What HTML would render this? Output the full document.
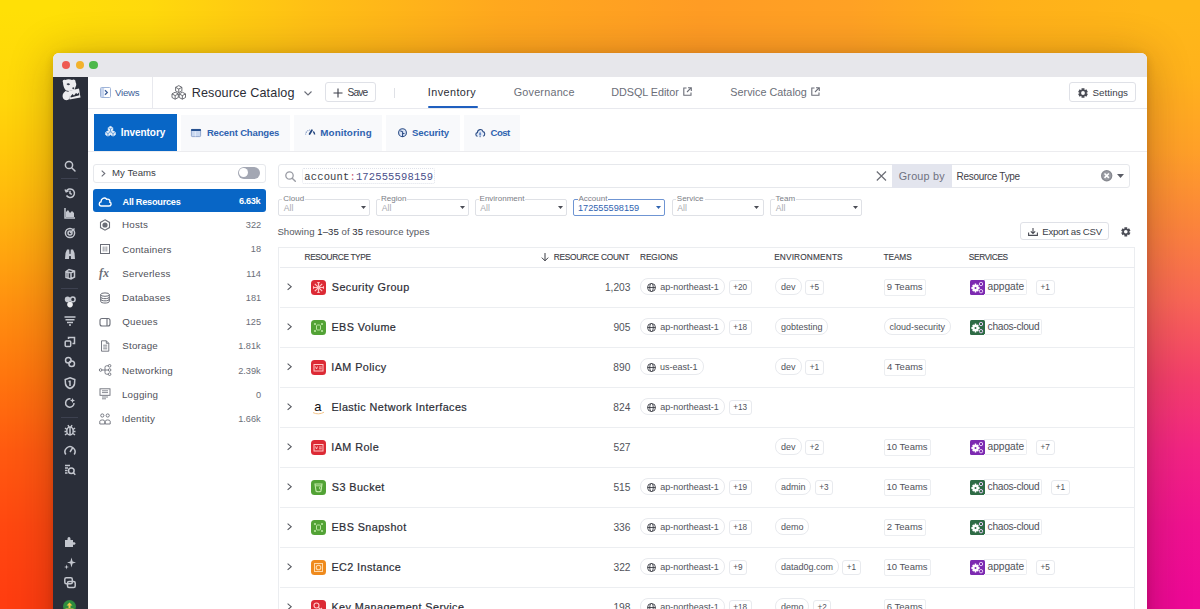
<!DOCTYPE html>
<html><head><meta charset="utf-8">
<style>
*{box-sizing:border-box;margin:0;padding:0}
html,body{width:1200px;height:609px;overflow:hidden;font-family:"Liberation Sans",sans-serif;color:#2d2f38;background:#ff9c24}
.a{position:absolute}
.t{position:absolute;white-space:nowrap}
svg.a{overflow:visible}
#bgtop{position:absolute;left:0;top:0;width:1200px;height:80px;background:linear-gradient(to right,#ffe006 0.8%,#ffd90c 12.5%,#ffc015 25.8%,#ffa81e 41.7%,#ff9c24 58.3%,#ffa124 70.8%,#ffb01a 83.3%,#ffb818 99.2%)}
#bgl{position:absolute;left:0;top:0;width:60px;height:609px;background:linear-gradient(to bottom,#ffe006 1.6%,#ffd60a 16.4%,#ffc90a 24.6%,#ffb30e 36.1%,#ff9210 49.3%,#ff760e 61.6%,#ff5a10 73.9%,#ff4810 86.2%,#ff3d10 98.5%)}
#bgr{position:absolute;left:1140px;top:0;width:60px;height:609px;background:linear-gradient(to bottom,#ffb818 1.6%,#ffb21c 12.3%,#ffa028 24.6%,#fb863a 36.1%,#f86656 49.3%,#f3406a 61.6%,#f22483 73.9%,#ef128f 86.2%,#ee0896 98.5%)}
#win{position:absolute;left:53px;top:53px;width:1094px;height:600px;background:#fff;border-radius:6px;overflow:hidden;box-shadow:0 2px 8px rgba(40,10,0,.14),0 4px 44px rgba(60,20,0,.3)}
</style></head><body>
<div id="bgtop"></div><div id="bgl"></div><div id="bgr"></div>
<div id="win"></div>
<div class="a" style="left:53px;top:53px;width:1094.00px;height:24.00px;background:#e7e7eb;border-radius:6px 6px 0 0"></div>
<div class="a" style="left:61.6px;top:60.8px;width:8.4px;height:8.4px;border-radius:50%;background:#ee5a52"></div>
<div class="a" style="left:75.5px;top:60.8px;width:8.4px;height:8.4px;border-radius:50%;background:#f2b22c"></div>
<div class="a" style="left:89.2px;top:60.8px;width:8.4px;height:8.4px;border-radius:50%;background:#4cb84a"></div>
<div class="a" style="left:53px;top:77px;width:35.00px;height:543.00px;background:#2a2e39"></div>
<svg class="a" style="left:60px;top:78px;" width="22" height="24" viewBox="0 0 22 24"><g fill="#ececef">
<path d="M3 4.5 C2 2.5 3.5 1 5.5 2 C7 1 10 1 12 2 C13.5 0.8 16 1.5 15.5 4 C16.5 5.5 16.5 7.5 15.5 9 L14.5 12 L9 13 L6 12.5 C4.5 11 3.5 8.5 3.2 6.5 Z"/>
<path d="M3.5 15 C2 17 2.3 20.5 4.5 21.8 C6.5 22.8 9 22 9.5 20 L9 14 L5.5 13 Z"/>
<path d="M8.5 13 L19 10.5 L20.5 19.5 L9.5 21.5 Z"/>
</g>
<path d="M6.5 6 C7.5 5 9.5 5.2 10 6.5 C9 7.5 7.5 7.5 6.5 6Z" fill="#3a3e4a"/>
<circle cx="13.3" cy="10.3" r="1" fill="#3a3e4a"/>
<path d="M10.5 18.5 L12.5 16 L14 17.5 L16 15 L17.5 16 L19 14.5 L19.3 17.3 L10.8 19.5Z" fill="#2a2e39"/></svg>
<div class="a" style="left:61px;top:178px;width:17.00px;height:1.00px;background:#3d4150"></div>
<div class="a" style="left:61px;top:288px;width:17.00px;height:1.00px;background:#3d4150"></div>
<div class="a" style="left:61px;top:417px;width:17.00px;height:1.00px;background:#3d4150"></div>
<svg class="a" style="left:63.8px;top:159.8px;" width="12" height="12" viewBox="0 0 12 12"><circle cx="5" cy="5" r="3.6" fill="none" stroke="#c4c7cf" stroke-width="1.5"/><path d="M7.7 7.7 L11 11" fill="none" stroke="#c4c7cf" stroke-width="1.5" stroke-linecap="round"/></svg>
<svg class="a" style="left:63.8px;top:186.8px;" width="12" height="12" viewBox="0 0 12 12"><path d="M2.2 4.5 A4.3 4.3 0 1 1 2.5 8.5" fill="none" stroke="#c4c7cf" stroke-width="1.5"/><path d="M1 2.5 L2.2 4.7 L4.5 3.8" fill="none" stroke="#c4c7cf" stroke-width="1.5"/><path d="M6 3.8 L6 6.3 L7.8 7.3" fill="none" stroke="#c4c7cf" stroke-width="1.5"/></svg>
<svg class="a" style="left:63.8px;top:207.0px;" width="12" height="12" viewBox="0 0 12 12"><path d="M1 1 L1 11 L11 11" fill="none" stroke="#c4c7cf" stroke-width="1.5"/><path fill="#c4c7cf" d="M2 10 L2 5 L4 3 L6 6 L8 4 L10 6 L10 10 Z"/></svg>
<svg class="a" style="left:63.8px;top:227.0px;" width="12" height="12" viewBox="0 0 12 12"><circle cx="6" cy="6" r="4.6" fill="none" stroke="#c4c7cf" stroke-width="1.5"/><circle cx="6" cy="6" r="2" fill="none" stroke="#c4c7cf" stroke-width="1.5"/><path d="M6 6 L10.5 1.5" fill="none" stroke="#c4c7cf" stroke-width="1.5"/></svg>
<svg class="a" style="left:63.8px;top:248.0px;" width="12" height="12" viewBox="0 0 12 12"><path fill="#c4c7cf" d="M1 11 L1.5 5 L3 1.5 L5.2 1.5 L5.5 6 L6.5 6 L6.8 1.5 L9 1.5 L10.5 5 L11 11 L7 11 L6.8 8 L5.2 8 L5 11 Z"/></svg>
<svg class="a" style="left:63.8px;top:268.0px;" width="12" height="12" viewBox="0 0 12 12"><path d="M2 3.5 L5 1.5 L10.5 3 L10.5 9 L7 11 L2 9.5 Z M2 3.5 L7 5 L10.5 3 M7 5 L7 11" fill="none" stroke="#c4c7cf" stroke-width="1.5" stroke-width="1.2"/><path d="M4 4.5 L4 10" fill="none" stroke="#c4c7cf" stroke-width="1.5" stroke-width="1"/></svg>
<svg class="a" style="left:63.8px;top:295.8px;" width="12" height="12" viewBox="0 0 12 12"><circle cx="3.6" cy="3.4" r="2.8" fill="#c4c7cf"/><circle cx="8.8" cy="3.4" r="2.3" fill="none" stroke="#c4c7cf" stroke-width="1.5" stroke-width="1.3"/><circle cx="6" cy="8.6" r="2.8" fill="#eeeef0"/></svg>
<svg class="a" style="left:63.8px;top:314.9px;" width="12" height="12" viewBox="0 0 12 12"><path d="M0.5 2 L11.5 2 M1.5 4.8 L10.5 4.8 M3 7.5 L9 7.5 M5 10 L7 10" fill="none" stroke="#c4c7cf" stroke-width="1.5" stroke-width="1.6"/></svg>
<svg class="a" style="left:63.8px;top:336.0px;" width="12" height="12" viewBox="0 0 12 12"><rect x="1.2" y="5" width="5.5" height="5.5" rx="1" fill="none" stroke="#c4c7cf" stroke-width="1.5" stroke-width="1.3"/><path d="M4.5 3 L4.5 1.5 L10.5 1.5 L10.5 7.5 L8.5 7.5" fill="none" stroke="#c4c7cf" stroke-width="1.5" stroke-width="1.3"/></svg>
<svg class="a" style="left:63.8px;top:356.3px;" width="12" height="12" viewBox="0 0 12 12"><circle cx="4.3" cy="4.3" r="2.8" fill="none" stroke="#c4c7cf" stroke-width="1.5"/><circle cx="7.7" cy="7.7" r="2.8" fill="none" stroke="#c4c7cf" stroke-width="1.5"/></svg>
<svg class="a" style="left:63.8px;top:376.6px;" width="12" height="12" viewBox="0 0 12 12"><path d="M6 0.8 L10.8 2.6 L10.5 7 C10 9.5 8 10.8 6 11.5 C4 10.8 2 9.5 1.5 7 L1.2 2.6 Z" fill="none" stroke="#c4c7cf" stroke-width="1.5" stroke-width="1.3"/><path d="M6 3.5 L6 9 M4.5 4.5 L6.5 4.5" fill="none" stroke="#c4c7cf" stroke-width="1.5" stroke-width="1.2"/></svg>
<svg class="a" style="left:63.8px;top:397.4px;" width="12" height="12" viewBox="0 0 12 12"><path d="M10 6 A4.2 4.2 0 1 1 6.5 1.9" fill="none" stroke="#c4c7cf" stroke-width="1.5"/><path fill="#c4c7cf" d="M8.5 1 L9.3 2.8 L11 3.5 L9.3 4.2 L8.5 6 L7.7 4.2 L6 3.5 L7.7 2.8Z"/></svg>
<svg class="a" style="left:63.8px;top:423.6px;" width="12" height="12" viewBox="0 0 12 12"><ellipse cx="6" cy="7" rx="3.2" ry="4" fill="none" stroke="#c4c7cf" stroke-width="1.5" stroke-width="1.3"/><path d="M6 3 L6 11 M1 4 L3 5.5 M11 4 L9 5.5 M0.5 7.5 L2.8 7.5 M11.5 7.5 L9.2 7.5 M1 11 L3 9.5 M11 11 L9 9.5 M4 1.2 L5 3 M8 1.2 L7 3" fill="none" stroke="#c4c7cf" stroke-width="1.5" stroke-width="1.1"/></svg>
<svg class="a" style="left:63.8px;top:444.4px;" width="12" height="12" viewBox="0 0 12 12"><path d="M1.8 10.5 A5 5 0 1 1 10.2 10.5" fill="none" stroke="#c4c7cf" stroke-width="1.5"/><path d="M6 8 L8.8 3.5" fill="none" stroke="#c4c7cf" stroke-width="1.5" stroke-width="1.6"/></svg>
<svg class="a" style="left:63.8px;top:464.3px;" width="12" height="12" viewBox="0 0 12 12"><path d="M1 1.5 L6 1.5 M1 4 L4 4 M1 6.5 L3.5 6.5 M1 9 L3.5 9" fill="none" stroke="#c4c7cf" stroke-width="1.5" stroke-width="1.2"/><circle cx="7.3" cy="6.8" r="2.8" fill="none" stroke="#c4c7cf" stroke-width="1.5" stroke-width="1.3"/><path d="M9.3 8.8 L11.3 10.8" fill="none" stroke="#c4c7cf" stroke-width="1.5"/></svg>
<svg class="a" style="left:63.8px;top:536.0px;" width="12" height="12" viewBox="0 0 12 12"><path fill="#c4c7cf" d="M1 11 L1 4 L3.5 4 C3.2 2 4 1 5 1 C6 1 6.8 2 6.5 4 L9 4 L9 6.3 C10.8 6 11.5 6.8 11.5 7.5 C11.5 8.2 10.8 9 9 8.7 L9 11 Z"/></svg>
<svg class="a" style="left:63.8px;top:556.8px;" width="12" height="12" viewBox="0 0 12 12"><path fill="#c4c7cf" d="M7.5 0.5 L8.6 4.4 L12 5.5 L8.6 6.6 L7.5 10.5 L6.4 6.6 L3 5.5 L6.4 4.4Z"/><path fill="#c4c7cf" d="M2.5 7.5 L3.1 9.4 L5 10 L3.1 10.6 L2.5 12.5 L1.9 10.6 L0 10 L1.9 9.4Z"/></svg>
<svg class="a" style="left:63.8px;top:576.5px;" width="12" height="12" viewBox="0 0 12 12"><rect x="0.8" y="0.8" width="7.5" height="6" rx="1.5" fill="none" stroke="#c4c7cf" stroke-width="1.5" stroke-width="1.3"/><rect x="3.5" y="4.5" width="7.7" height="6" rx="1.5" fill="none" stroke="#c4c7cf" stroke-width="1.5" stroke-width="1.3"/></svg>
<svg class="a" style="left:63.3px;top:599.5px;" width="13" height="13" viewBox="0 0 13 13"><circle cx="6.5" cy="6.5" r="6.5" fill="#2e8c3e"/><path fill="#f0c84a" d="M2.5 8.5 L10.5 8.5 L10.5 11 L2.5 11Z M6.5 2.5 L9.5 5.5 L7.5 5.5 L7.5 8 L5.5 8 L5.5 5.5 L3.5 5.5Z"/></svg>
<div class="a" style="left:88px;top:108px;width:1059.00px;height:1.00px;background:#e8e9ee"></div>
<div class="a" style="left:152px;top:77px;width:1.00px;height:31.00px;background:#e8e9ee"></div>
<svg class="a" style="left:99.8px;top:86.9px;" width="11" height="11" viewBox="0 0 11 11"><rect x="0.5" y="0.5" width="10" height="10" rx="1" fill="#fff" stroke="#9fb4d8"/><rect x="1" y="1" width="3.2" height="9" fill="#c7d5ee"/><path d="M5 3.2 L7.3 5.5 L5 7.8" fill="none" stroke="#3d5f99" stroke-width="1.3"/></svg>
<div class="t" style="left:114.95px;top:88px;font-size:9.6px;line-height:9.6px;color:#3d5f99;letter-spacing:-0.202px;">Views</div>
<svg class="a" style="left:170.5px;top:84.8px;" width="15.5" height="15" viewBox="0 0 15.5 15"><g fill="none" stroke="#55575f" stroke-width="0.85" stroke-linejoin="round"><path d="M7.75 0.6 L10.9 2.3 L10.9 5.9 L7.75 7.6 L4.6 5.9 L4.6 2.3Z M4.6 2.3 L7.75 4 L10.9 2.3 M7.75 4 L7.75 7.6"/><path d="M4.15 7.2 L7.3 8.9 L7.3 12.5 L4.15 14.2 L1 12.5 L1 8.9Z M1 8.9 L4.15 10.6 L7.3 8.9 M4.15 10.6 L4.15 14.2"/><path d="M11.35 7.2 L14.5 8.9 L14.5 12.5 L11.35 14.2 L8.2 12.5 L8.2 8.9Z M8.2 8.9 L11.35 10.6 L14.5 8.9 M11.35 10.6 L11.35 14.2"/></g></svg>
<div class="t" style="left:191.69px;top:87px;font-size:12.6px;line-height:12.6px;color:#2b2d36;letter-spacing:0.131px;">Resource Catalog</div>
<svg class="a" style="left:303.5px;top:90.5px;" width="8" height="5" viewBox="0 0 8 5"><path d="M0.5 0.5 L4 4 L7.5 0.5" fill="none" stroke="#6b6e78" stroke-width="1.1"/></svg>
<div class="a" style="left:324.6px;top:82px;width:51.00px;height:20.00px;border:1px solid #dfe1e7;border-radius:3px;background:#fff"></div>
<svg class="a" style="left:333px;top:87.5px;" width="10" height="10" viewBox="0 0 10 10"><path d="M5 0.5 L5 9.5 M0.5 5 L9.5 5" stroke="#3a3d48" stroke-width="1.1"/></svg>
<div class="t" style="left:347.54px;top:88px;font-size:10.2px;line-height:10.2px;color:#3a3d48;letter-spacing:-0.879px;">Save</div>
<div class="a" style="left:393.5px;top:88px;width:1.00px;height:10.00px;background:#dfe1e6"></div>
<div class="t" style="left:427.78px;top:87px;font-size:10.8px;line-height:10.8px;color:#2b2d36;letter-spacing:0.441px;">Inventory</div>
<div class="a" style="left:428px;top:105.5px;width:49.50px;height:2.50px;background:#1f5fbf;border-radius:1px"></div>
<div class="t" style="left:513.66px;top:87px;font-size:10.8px;line-height:10.8px;color:#6b6e78;letter-spacing:0.224px;">Governance</div>
<div class="t" style="left:611.24px;top:87px;font-size:10.8px;line-height:10.8px;color:#6b6e78;letter-spacing:-0.033px;">DDSQL Editor</div>
<svg class="a" style="left:683px;top:86.8px;" width="9" height="9" viewBox="0 0 9 9"><path d="M3.5 1 L0.8 1 L0.8 8.2 L8 8.2 L8 5.5" fill="none" stroke="#6b6e78" stroke-width="1.1"/><path d="M4 5 L8.3 0.7 M5 0.7 L8.3 0.7 L8.3 4" fill="none" stroke="#6b6e78" stroke-width="1.1"/></svg>
<div class="t" style="left:730.31px;top:87px;font-size:10.8px;line-height:10.8px;color:#6b6e78;letter-spacing:0.024px;">Service Catalog</div>
<svg class="a" style="left:810.5px;top:86.8px;" width="9" height="9" viewBox="0 0 9 9"><path d="M3.5 1 L0.8 1 L0.8 8.2 L8 8.2 L8 5.5" fill="none" stroke="#6b6e78" stroke-width="1.1"/><path d="M4 5 L8.3 0.7 M5 0.7 L8.3 0.7 L8.3 4" fill="none" stroke="#6b6e78" stroke-width="1.1"/></svg>
<div class="a" style="left:1069.3px;top:82.3px;width:66.40px;height:19.40px;border:1px solid #dfe1e7;border-radius:3px;background:#fff"></div>
<svg class="a" style="left:1077.5px;top:87.5px;" width="10" height="10" viewBox="0 0 10 10"><path fill="#4a4c55" fill-rule="evenodd" d="M3.53 1.71 L3.52 0.22 L6.48 0.22 L6.47 1.71 L7.11 2.09 L8.40 1.33 L9.88 3.89 L8.58 4.63 L8.58 5.37 L9.88 6.11 L8.40 8.67 L7.11 7.91 L6.47 8.29 L6.48 9.78 L3.52 9.78 L3.53 8.29 L2.89 7.91 L1.60 8.67 L0.12 6.11 L1.42 5.37 L1.42 4.63 L0.12 3.89 L1.60 1.33 L2.89 2.09Z M5 3.1 A1.9 1.9 0 1 0 5 6.9 A1.9 1.9 0 1 0 5 3.1Z"/></svg>
<div class="t" style="left:1092.56px;top:88px;font-size:9.8px;line-height:9.8px;color:#3a3d48;letter-spacing:0.008px;">Settings</div>
<div class="a" style="left:88px;top:151px;width:1059.00px;height:1.00px;background:#ececef"></div>
<div class="a" style="left:94.1px;top:113.9px;width:82.80px;height:36.70px;background:#0866c6"></div>
<svg class="a" style="left:104.8px;top:126.2px;" width="11" height="10.6" viewBox="0 0 15.5 15"><g fill="#e8f0fb" stroke="#fff" stroke-width="1.1" stroke-linejoin="round"><path d="M7.75 0.6 L10.9 2.3 L10.9 5.9 L7.75 7.6 L4.6 5.9 L4.6 2.3Z"/><path d="M4.15 7.2 L7.3 8.9 L7.3 12.5 L4.15 14.2 L1 12.5 L1 8.9Z"/><path d="M11.35 7.2 L14.5 8.9 L14.5 12.5 L11.35 14.2 L8.2 12.5 L8.2 8.9Z"/></g><g fill="none" stroke="#0866c6" stroke-width="0.8"><path d="M4.6 2.3 L7.75 4 L10.9 2.3 M7.75 4 L7.75 7.6 M1 8.9 L4.15 10.6 L7.3 8.9 M4.15 10.6 L4.15 14.2 M8.2 8.9 L11.35 10.6 L14.5 8.9 M11.35 10.6 L11.35 14.2"/></g></svg>
<div class="t" style="left:120.65px;top:128px;font-size:10px;line-height:10px;color:#ffffff;font-weight:700;letter-spacing:-0.038px;">Inventory</div>
<div class="a" style="left:180.5px;top:114.5px;width:109.50px;height:36.50px;background:#f8f9fb"></div>
<svg class="a" style="left:191px;top:128.5px;" width="10" height="8" viewBox="0 0 10 8"><rect x="0.4" y="0.4" width="9.2" height="7.2" rx="0.8" fill="#c9d8f0" stroke="#7f97c4" stroke-width="0.8"/><rect x="0" y="0" width="10" height="2" rx="0.8" fill="#27518f"/><path d="M4.3 2.5 L4.3 7.5" stroke="#eef3fb" stroke-width="0.8"/></svg>
<div class="t" style="left:206.88px;top:128px;font-size:9.5px;line-height:9.5px;color:#2f63b0;font-weight:700;letter-spacing:-0.149px;">Recent Changes</div>
<div class="a" style="left:294px;top:114.5px;width:88.40px;height:36.50px;background:#f8f9fb"></div>
<svg class="a" style="left:304.5px;top:125.5px;" width="10" height="10" viewBox="0 0 10 10"><path d="M0.6 8.6 A4.5 4.5 0 0 1 5.1 4.1" fill="none" stroke="#7d95c2" stroke-width="1.2" stroke-dasharray="1.1 0.9"/><path d="M8.3 5.4 A4.5 4.5 0 0 1 9.6 8.6" fill="none" stroke="#23467f" stroke-width="1.4"/><path d="M4.6 8 L6.9 4.3" stroke="#23467f" stroke-width="1.8" stroke-linecap="round"/></svg>
<div class="t" style="left:320.36px;top:128px;font-size:9.8px;line-height:9.8px;color:#2f63b0;font-weight:700;letter-spacing:0.073px;">Monitoring</div>
<div class="a" style="left:385.6px;top:114.5px;width:74.40px;height:36.50px;background:#f8f9fb"></div>
<svg class="a" style="left:397.5px;top:127.6px;" width="9" height="9.4" viewBox="0 0 9 9.4"><circle cx="4.5" cy="4.7" r="3.9" fill="#dce6f7" stroke="#2d4e86" stroke-width="1.1"/><path d="M2.2 2.8 L4.6 3.8 L4.6 8.3 M4.6 5.5 L6.5 5.5" fill="none" stroke="#2d4e86" stroke-width="1.1"/></svg>
<div class="t" style="left:412.11px;top:128px;font-size:9.6px;line-height:9.6px;color:#2f63b0;font-weight:700;letter-spacing:-0.134px;">Security</div>
<div class="a" style="left:463.6px;top:114.5px;width:56.90px;height:36.50px;background:#f8f9fb"></div>
<svg class="a" style="left:475px;top:127.8px;" width="10.2" height="9.2" viewBox="0 0 10.2 9.2"><path d="M2.6 8.2 C0.4 8.2 0.2 4.9 2.4 4.6 C2.6 1.2 7 0.4 8 3.6 C10.2 3.8 10.4 7.6 8.2 8.2" fill="#e3ebf8" stroke="#2d4e86" stroke-width="1.1"/><path d="M5.1 3.5 L6.3 6.2 L5.1 7.6 L3.9 6.2Z" fill="#5f86c8"/><path d="M5.1 7.6 L5.1 9.2" stroke="#2d4e86" stroke-width="0.9"/></svg>
<div class="t" style="left:490.62px;top:128px;font-size:9.6px;line-height:9.6px;color:#2f63b0;font-weight:700;letter-spacing:-0.611px;">Cost</div>
<div class="a" style="left:92.5px;top:163.5px;width:173.50px;height:19.00px;border:1px solid #e6e8ec;border-radius:3px"></div>
<svg class="a" style="left:100.5px;top:170px;" width="5" height="7" viewBox="0 0 5 7"><path d="M0.7 0.7 L3.8 3.5 L0.7 6.3" fill="none" stroke="#6b6e78" stroke-width="1.1"/></svg>
<div class="t" style="left:111.93px;top:168px;font-size:9.6px;line-height:9.6px;color:#3a3d45;letter-spacing:0.060px;">My Teams</div>
<div class="a" style="left:237.6px;top:166.5px;width:22.40px;height:12.50px;background:#a3a7b3;border-radius:7px"></div>
<div class="a" style="left:239.3px;top:168.2px;width:9.2px;height:9.2px;border-radius:50%;background:#fff"></div>
<div class="a" style="left:92.75px;top:188.7px;width:173.05px;height:23.80px;background:#0866c6;border-radius:3px"></div>
<svg class="a" style="left:98px;top:195.5px;" width="14" height="11" viewBox="0 0 14 11"><path d="M3.2 10 C0.8 10 0.6 6.2 3 5.8 C3 2.5 6.5 0.8 8.7 3.3 C10.8 2.6 12.5 4.3 11.8 6.2 C13.8 6.8 13.5 10 11 10 Z" fill="none" stroke="#fff" stroke-width="1.4"/></svg>
<div class="t" style="left:122.52px;top:198px;font-size:9.2px;line-height:9.2px;color:#ffffff;font-weight:700;letter-spacing:-0.247px;">All Resources</div>
<div class="t" style="left:239.08px;top:197px;font-size:9.2px;line-height:9.2px;color:#ffffff;font-weight:700;letter-spacing:-0.345px;">6.63k</div>
<svg class="a" style="left:98.7px;top:219.0px;" width="12" height="12" viewBox="0 0 12 12"><path d="M6 0.8 L10.5 3.4 L10.5 8.6 L6 11.2 L1.5 8.6 L1.5 3.4Z" fill="none" stroke="#6b6e78" stroke-width="1.1"/><circle cx="6" cy="6" r="2.6" fill="#6b6e78"/></svg>
<div class="t" style="left:121.97px;top:220px;font-size:9.8px;line-height:9.8px;color:#50525a;letter-spacing:0.200px;">Hosts</div>
<div class="t" style="left:245.84px;top:221px;font-size:9.2px;line-height:9.2px;color:#6b6e78;">322</div>
<svg class="a" style="left:98.7px;top:243.2px;" width="12" height="12" viewBox="0 0 12 12"><rect x="1.5" y="1.5" width="9" height="9" fill="none" stroke="#6b6e78" stroke-width="1"/><path d="M4.2 3.5 L4.2 8.5 M6 3.5 L6 8.5 M7.8 3.5 L7.8 8.5" stroke="#6b6e78" stroke-width="0.7"/></svg>
<div class="t" style="left:122.26px;top:245px;font-size:9.8px;line-height:9.8px;color:#50525a;letter-spacing:0.200px;">Containers</div>
<div class="t" style="left:250.86px;top:245px;font-size:9.2px;line-height:9.2px;color:#6b6e78;">18</div>
<svg class="a" style="left:98.7px;top:267.4px;" width="12" height="12" viewBox="0 0 12 12"><text x="0" y="9.8" font-family="Liberation Serif" font-style="italic" font-weight="bold" font-size="12" fill="#6b6e78">fx</text></svg>
<div class="t" style="left:122.31px;top:269px;font-size:9.8px;line-height:9.8px;color:#50525a;letter-spacing:0.200px;">Serverless</div>
<div class="t" style="left:246.30px;top:270px;font-size:9.2px;line-height:9.2px;color:#6b6e78;">114</div>
<svg class="a" style="left:98.7px;top:291.6px;" width="12" height="12" viewBox="0 0 12 12"><g fill="none" stroke="#6b6e78" stroke-width="1"><ellipse cx="6" cy="2.6" rx="4.3" ry="1.7"/><path d="M1.7 2.6 L1.7 9.4 C1.7 11.6 10.3 11.6 10.3 9.4 L10.3 2.6 M1.7 5 C1.7 7.2 10.3 7.2 10.3 5 M1.7 7.2 C1.7 9.4 10.3 9.4 10.3 7.2"/></g></svg>
<div class="t" style="left:121.97px;top:293px;font-size:9.8px;line-height:9.8px;color:#50525a;letter-spacing:0.200px;">Databases</div>
<div class="t" style="left:245.80px;top:294px;font-size:9.2px;line-height:9.2px;color:#6b6e78;">181</div>
<svg class="a" style="left:98.7px;top:315.8px;" width="12" height="12" viewBox="0 0 12 12"><g fill="none" stroke="#6b6e78" stroke-width="1.1"><rect x="1" y="2.5" width="10" height="7.5" rx="2"/><path d="M8 2.5 L8 10"/></g></svg>
<div class="t" style="left:122.31px;top:317px;font-size:9.8px;line-height:9.8px;color:#50525a;letter-spacing:0.200px;">Queues</div>
<div class="t" style="left:245.75px;top:318px;font-size:9.2px;line-height:9.2px;color:#6b6e78;">125</div>
<svg class="a" style="left:98.7px;top:340.0px;" width="12" height="12" viewBox="0 0 12 12"><g fill="none" stroke="#6b6e78" stroke-width="0.9"><path d="M2.5 0.8 L7.3 0.8 L9.8 3.3 L9.8 11.2 L2.5 11.2Z M7.3 0.8 L7.3 3.3 L9.8 3.3"/><path d="M4.2 5.2 L8.2 5.2 M4.2 7 L8.2 7 M4.2 8.8 L8.2 8.8" stroke-width="0.8"/></g></svg>
<div class="t" style="left:122.31px;top:341px;font-size:9.8px;line-height:9.8px;color:#50525a;letter-spacing:0.200px;">Storage</div>
<div class="t" style="left:238.21px;top:342px;font-size:9.2px;line-height:9.2px;color:#6b6e78;">1.81k</div>
<svg class="a" style="left:98.7px;top:364.2px;" width="12" height="12" viewBox="0 0 12 12"><g fill="none" stroke="#6b6e78" stroke-width="0.9"><circle cx="1.6" cy="6" r="1.3"/><circle cx="10.6" cy="1.8" r="1.3"/><circle cx="10.6" cy="6" r="1.3"/><circle cx="10.6" cy="10.2" r="1.3"/><path d="M2.9 6 L9.3 6 M6 6 L6 3.3 Q6 1.8 7.5 1.8 L9.3 1.8 M6 6 L6 8.7 Q6 10.2 7.5 10.2 L9.3 10.2"/></g></svg>
<div class="t" style="left:121.97px;top:366px;font-size:9.8px;line-height:9.8px;color:#50525a;letter-spacing:0.200px;">Networking</div>
<div class="t" style="left:238.21px;top:367px;font-size:9.2px;line-height:9.2px;color:#6b6e78;">2.39k</div>
<svg class="a" style="left:98.7px;top:388.4px;" width="12" height="12" viewBox="0 0 12 12"><g fill="none" stroke="#6b6e78" stroke-width="0.9"><rect x="1" y="0.8" width="10" height="6.5"/><path d="M3 2.8 L9 2.8 M3 4.6 L9 4.6 M3 9 L9 9 M3 10.8 L7 10.8" stroke-width="0.8"/></g></svg>
<div class="t" style="left:121.97px;top:390px;font-size:9.8px;line-height:9.8px;color:#50525a;letter-spacing:0.200px;">Logging</div>
<div class="t" style="left:255.92px;top:391px;font-size:9.2px;line-height:9.2px;color:#6b6e78;">0</div>
<svg class="a" style="left:98.7px;top:412.6px;" width="12" height="12" viewBox="0 0 12 12"><g fill="none" stroke="#6b6e78" stroke-width="0.9"><circle cx="3.3" cy="2.5" r="1.6"/><circle cx="8.7" cy="2.5" r="1.6"/><path d="M0.8 11 L0.8 8.2 C0.8 6.5 5.8 6.5 5.8 8.2 L5.8 11Z M6.2 11 L6.2 8.2 C6.2 6.5 11.2 6.5 11.2 8.2 L11.2 11Z"/></g></svg>
<div class="t" style="left:121.87px;top:414px;font-size:9.8px;line-height:9.8px;color:#50525a;letter-spacing:0.200px;">Identity</div>
<div class="t" style="left:238.21px;top:415px;font-size:9.2px;line-height:9.2px;color:#6b6e78;">1.66k</div>
<div class="a" style="left:278px;top:163.5px;width:851.50px;height:24.50px;border:1px solid #e6e8ec;border-radius:3px;background:#fff"></div>
<svg class="a" style="left:284.5px;top:171.3px;" width="11" height="11" viewBox="0 0 11 11"><circle cx="4.5" cy="4.5" r="3.7" fill="none" stroke="#9a9ca4" stroke-width="1.3"/><path d="M7.2 7.2 L10.3 10.3" stroke="#9a9ca4" stroke-width="1.4" stroke-linecap="round"/></svg>
<div class="a" style="left:301.5px;top:167.8px;width:133.80px;height:16.20px;border:1px dotted #dfe2ea;border-radius:2px"></div>
<div class="t" style="left:304.37px;top:172px;font-size:10.5px;line-height:10.5px;font-family:'Liberation Mono',monospace;color:#3a3c44;letter-spacing:0.14px">account<span style="color:#d0607a">:</span><span style="color:#4a4f8a">172555598159</span></div>
<svg class="a" style="left:876px;top:170.6px;" width="11" height="10" viewBox="0 0 11 10"><path d="M0.8 0.5 L10 9.5 M10 0.5 L0.8 9.5" stroke="#6b6d75" stroke-width="1.2"/></svg>
<div class="a" style="left:892.2px;top:163.5px;width:59.50px;height:24.50px;background:#e3e5ee"></div>
<div class="t" style="left:898.76px;top:171px;font-size:10.8px;line-height:10.8px;color:#6e7180;letter-spacing:0.200px;">Group by</div>
<div class="t" style="left:956.60px;top:172px;font-size:10px;line-height:10px;color:#3f4149;letter-spacing:-0.292px;">Resource Type</div>
<svg class="a" style="left:1100.9px;top:169.6px;" width="11.4" height="11.4" viewBox="0 0 11.4 11.4"><circle cx="5.7" cy="5.7" r="5.7" fill="#86888f"/><circle cx="5.7" cy="5.7" r="4.5" fill="#9a9ca3"/><path d="M3.5 3.5 L7.9 7.9 M7.9 3.5 L3.5 7.9" stroke="#fff" stroke-width="1.6"/></svg>
<svg class="a" style="left:1116.7px;top:173.8px;" width="7" height="4" viewBox="0 0 7 4"><path d="M0 0 L7 0 L3.5 4Z" fill="#5a5c65"/></svg>
<div class="a" style="left:278px;top:199.2px;width:92.00px;height:16.40px;border:1px solid #dfe1e6;border-radius:2px;background:#fff"></div>
<div class="t" style="left:282.30px;top:195px;font-size:8px;line-height:8px;color:#7b7e86;background:#fff;padding:0 1px;">Cloud</div>
<div class="t" style="left:283.80px;top:204px;font-size:8.6px;line-height:8.6px;color:#a8aab0;">All</div>
<svg class="a" style="left:360.8px;top:206.2px;" width="5" height="3" viewBox="0 0 5 3"><path d="M0 0 L5 0 L2.5 3Z" fill="#4a4c55"/></svg>
<div class="a" style="left:376px;top:199.2px;width:93.00px;height:16.40px;border:1px solid #dfe1e6;border-radius:2px;background:#fff"></div>
<div class="t" style="left:380.06px;top:195px;font-size:8px;line-height:8px;color:#7b7e86;background:#fff;padding:0 1px;">Region</div>
<div class="t" style="left:381.80px;top:204px;font-size:8.6px;line-height:8.6px;color:#a8aab0;">All</div>
<svg class="a" style="left:459.8px;top:206.2px;" width="5" height="3" viewBox="0 0 5 3"><path d="M0 0 L5 0 L2.5 3Z" fill="#4a4c55"/></svg>
<div class="a" style="left:474.5px;top:199.2px;width:92.50px;height:16.40px;border:1px solid #dfe1e6;border-radius:2px;background:#fff"></div>
<div class="t" style="left:478.56px;top:195px;font-size:8px;line-height:8px;color:#7b7e86;background:#fff;padding:0 1px;">Environment</div>
<div class="t" style="left:480.30px;top:204px;font-size:8.6px;line-height:8.6px;color:#a8aab0;">All</div>
<svg class="a" style="left:557.8px;top:206.2px;" width="5" height="3" viewBox="0 0 5 3"><path d="M0 0 L5 0 L2.5 3Z" fill="#4a4c55"/></svg>
<div class="a" style="left:572.8px;top:199.2px;width:92.50px;height:16.40px;border:1px solid #6f95d3;border-radius:2px;background:#fff"></div>
<div class="t" style="left:577.50px;top:195px;font-size:8px;line-height:8px;color:#7b7e86;background:#fff;padding:0 1px;">Account</div>
<div class="t" style="left:577.91px;top:204px;font-size:9.2px;line-height:9.2px;color:#2f63b0;">172555598159</div>
<svg class="a" style="left:656.1px;top:206.2px;" width="5" height="3" viewBox="0 0 5 3"><path d="M0 0 L5 0 L2.5 3Z" fill="#2f63b0"/></svg>
<div class="a" style="left:671.5px;top:199.2px;width:92.00px;height:16.40px;border:1px solid #dfe1e6;border-radius:2px;background:#fff"></div>
<div class="t" style="left:675.84px;top:195px;font-size:8px;line-height:8px;color:#7b7e86;background:#fff;padding:0 1px;">Service</div>
<div class="t" style="left:677.30px;top:204px;font-size:8.6px;line-height:8.6px;color:#a8aab0;">All</div>
<svg class="a" style="left:754.3px;top:206.2px;" width="5" height="3" viewBox="0 0 5 3"><path d="M0 0 L5 0 L2.5 3Z" fill="#4a4c55"/></svg>
<div class="a" style="left:770px;top:199.2px;width:92.00px;height:16.40px;border:1px solid #dfe1e6;border-radius:2px;background:#fff"></div>
<div class="t" style="left:774.54px;top:195px;font-size:8px;line-height:8px;color:#7b7e86;background:#fff;padding:0 1px;">Team</div>
<div class="t" style="left:775.80px;top:204px;font-size:8.6px;line-height:8.6px;color:#a8aab0;">All</div>
<svg class="a" style="left:852.8px;top:206.2px;" width="5" height="3" viewBox="0 0 5 3"><path d="M0 0 L5 0 L2.5 3Z" fill="#4a4c55"/></svg>
<div class="t" style="left:277.4px;top:227px;font-size:9.6px;line-height:9.6px;color:#55575f;letter-spacing:0.05px">Showing <span style="color:#2b2d36">1–35</span> of <span style="color:#2b2d36">35</span> resource types</div>
<div class="a" style="left:1019.7px;top:221.6px;width:89.60px;height:18.80px;border:1px solid #dfe1e7;border-radius:3px;background:#fff"></div>
<svg class="a" style="left:1027.5px;top:228px;" width="10" height="8" viewBox="0 0 10 8"><path d="M0.6 4.5 L0.6 7.4 L9.4 7.4 L9.4 4.5" fill="none" stroke="#4a4c55" stroke-width="1.1"/><path d="M5 0 L5 5.5 M2.8 3.3 L5 5.5 L7.2 3.3" fill="none" stroke="#4a4c55" stroke-width="1.1"/></svg>
<div class="t" style="left:1042.33px;top:227px;font-size:9.6px;line-height:9.6px;color:#3a3d48;letter-spacing:-0.268px;">Export as CSV</div>
<svg class="a" style="left:1120.7px;top:226.5px;" width="9.6" height="9.6" viewBox="0 0 10 10"><path fill="#4a4c55" fill-rule="evenodd" d="M3.53 1.71 L3.52 0.22 L6.48 0.22 L6.47 1.71 L7.11 2.09 L8.40 1.33 L9.88 3.89 L8.58 4.63 L8.58 5.37 L9.88 6.11 L8.40 8.67 L7.11 7.91 L6.47 8.29 L6.48 9.78 L3.52 9.78 L3.53 8.29 L2.89 7.91 L1.60 8.67 L0.12 6.11 L1.42 5.37 L1.42 4.63 L0.12 3.89 L1.60 1.33 L2.89 2.09Z M5 3.1 A1.9 1.9 0 1 0 5 6.9 A1.9 1.9 0 1 0 5 3.1Z"/></svg>
<div class="a" style="left:277.6px;top:246.8px;width:857.70px;height:393.20px;border:1px solid #ebedf0"></div>
<div class="a" style="left:279.5px;top:267px;width:855.00px;height:1.00px;background:#e9ebef"></div>
<div class="t" style="left:304.54px;top:253px;font-size:8.3px;line-height:8.3px;color:#3a3c44;letter-spacing:-0.370px;-webkit-text-stroke:0.12px #3a3c44;">RESOURCE TYPE</div>
<svg class="a" style="left:541px;top:253px;" width="8" height="8.5" viewBox="0 0 8 8.5"><path d="M4 0 L4 7.8 M0.8 4.6 L4 7.8 L7.2 4.6" fill="none" stroke="#3a3c44" stroke-width="1"/></svg>
<div class="t" style="left:553.74px;top:253px;font-size:8.3px;line-height:8.3px;color:#3a3c44;letter-spacing:-0.232px;-webkit-text-stroke:0.12px #3a3c44;">RESOURCE COUNT</div>
<div class="t" style="left:639.94px;top:253px;font-size:8.3px;line-height:8.3px;color:#3a3c44;letter-spacing:-0.054px;-webkit-text-stroke:0.12px #3a3c44;">REGIONS</div>
<div class="t" style="left:774.14px;top:253px;font-size:8.3px;line-height:8.3px;color:#3a3c44;letter-spacing:0.153px;-webkit-text-stroke:0.12px #3a3c44;">ENVIRONMENTS</div>
<div class="t" style="left:883.43px;top:253px;font-size:8.3px;line-height:8.3px;color:#3a3c44;letter-spacing:-0.064px;-webkit-text-stroke:0.12px #3a3c44;">TEAMS</div>
<div class="t" style="left:968.83px;top:253px;font-size:8.3px;line-height:8.3px;color:#3a3c44;letter-spacing:-0.363px;-webkit-text-stroke:0.12px #3a3c44;">SERVICES</div>
<div class="a" style="left:279.5px;top:307px;width:855.00px;height:1.00px;background:#eceef1"></div>
<svg class="a" style="left:287px;top:282.8px;" width="5" height="7.5" viewBox="0 0 5 7.5"><path d="M0.6 0.6 L4.2 3.7 L0.6 6.8" fill="none" stroke="#55575f" stroke-width="1.1"/></svg>
<svg class="a" style="left:310.9px;top:280px;" width="15" height="15" viewBox="0 0 15 15"><rect x="0" y="0" width="15" height="15" rx="3.5" fill="#dc2a35"/><g stroke="#ffc4c4" stroke-width="1.2" fill="none"><path d="M7.5 2.3 L7.5 12.7 M2.3 7.5 L12.7 7.5 M3.8 3.8 L11.2 11.2 M11.2 3.8 L3.8 11.2"/></g><g fill="#ffc4c4"><path d="M5.8 2 L9.2 2 L7.5 4Z M5.8 13 L9.2 13 L7.5 11Z M2 5.8 L2 9.2 L4 7.5Z M13 5.8 L13 9.2 L11 7.5Z"/><circle cx="7.5" cy="7.5" r="1.6"/></g></svg>
<div class="t" style="left:331.81px;top:282px;font-size:10.8px;line-height:10.8px;color:#2b2d36;letter-spacing:0.420px;-webkit-text-stroke:0.2px #2b2d36;">Security Group</div>
<div class="t" style="left:604.91px;top:283px;font-size:10.2px;line-height:10.2px;color:#50525a;">1,203</div>
<div class="a" style="left:640px;top:278.4px;width:84.88px;height:16.80px;border:1px solid #e8eaee;border-radius:8px"></div>
<svg class="a" style="left:646.7px;top:283px;" width="9" height="9" viewBox="0 0 9 9"><g fill="none" stroke="#3a3c44" stroke-width="0.9"><circle cx="4.5" cy="4.5" r="4"/><ellipse cx="4.5" cy="4.5" rx="1.8" ry="4"/><path d="M0.5 4.5 L8.5 4.5"/></g></svg>
<div class="t" style="left:660.34px;top:283px;font-size:9.0px;line-height:9.0px;color:#50525a;">ap-northeast-1</div>
<div class="a" style="left:728.68px;top:280px;width:23.20px;height:14.50px;border:1px solid #e8eaee;border-radius:3px"></div>
<div class="t" style="left:733.27px;top:284px;font-size:8.2px;line-height:8.2px;color:#50525a;">+20</div>
<div class="a" style="left:775.3px;top:278.4px;width:26.48px;height:16.80px;border:1px solid #e8eaee;border-radius:8px"></div>
<div class="t" style="left:780.94px;top:283px;font-size:9.0px;line-height:9.0px;color:#50525a;">dev</div>
<div class="a" style="left:805.18px;top:280px;width:18.62px;height:14.50px;border:1px solid #e8eaee;border-radius:3px"></div>
<div class="t" style="left:809.77px;top:284px;font-size:8.2px;line-height:8.2px;color:#50525a;">+5</div>
<div class="a" style="left:884px;top:279px;width:41.76px;height:16.50px;border:1px solid #eceef1;border-radius:2px"></div>
<div class="t" style="left:886.87px;top:282px;font-size:9.5px;line-height:9.5px;color:#50525a;">9 Teams</div>
<svg class="a" style="left:969.9px;top:279.8px;" width="15" height="15" viewBox="0 0 15 15"><rect x="0" y="0" width="15" height="15" rx="1.5" fill="#7d2ab1"/><g fill="#fff"><circle cx="5.5" cy="8" r="2.6"/><path d="M4.8 3.6 L6.2 3.6 L6.5 5 L7.8 4.4 L8.8 5.4 L8.2 6.7 L9.6 7 L9.6 8.9 L8.2 9.2 L8.8 10.5 L7.8 11.5 L6.5 10.9 L6.2 12.4 L4.8 12.4 L4.5 10.9 L3.2 11.5 L2.2 10.5 L2.8 9.2 L1.4 8.9 L1.4 7 L2.8 6.7 L2.2 5.4 L3.2 4.4 L4.5 5Z"/></g><circle cx="5.5" cy="8" r="1" fill="#7d2ab1"/><g fill="none" stroke="#e6c8f5" stroke-width="1"><circle cx="11" cy="4" r="1.7"/><circle cx="11" cy="11.2" r="1.7"/></g></svg>
<div class="a" style="left:984px;top:279.3px;width:43.00px;height:15.70px;border:1px solid #eceef1;border-left:none;border-radius:0 2px 2px 0"></div>
<div class="t" style="left:987.59px;top:282px;font-size:10.2px;line-height:10.2px;color:#50525a;letter-spacing:-0.034px;">appgate</div>
<div class="a" style="left:1036.0px;top:280px;width:18.57px;height:14.50px;border:1px solid #e8eaee;border-radius:3px"></div>
<div class="t" style="left:1040.59px;top:284px;font-size:8.2px;line-height:8.2px;color:#50525a;">+1</div>
<div class="a" style="left:279.5px;top:347px;width:855.00px;height:1.00px;background:#eceef1"></div>
<svg class="a" style="left:287px;top:322.8px;" width="5" height="7.5" viewBox="0 0 5 7.5"><path d="M0.6 0.6 L4.2 3.7 L0.6 6.8" fill="none" stroke="#55575f" stroke-width="1.1"/></svg>
<svg class="a" style="left:310.9px;top:320px;" width="15" height="15" viewBox="0 0 15 15"><rect x="0" y="0" width="15" height="15" rx="3.5" fill="#52a235"/><g fill="#b8e6a0"><circle cx="4" cy="4" r="1.1"/><circle cx="11" cy="4" r="1.1"/><circle cx="4" cy="11" r="1.1"/><circle cx="11" cy="11" r="1.1"/></g><rect x="5.5" y="5" width="4" height="5" rx="1" fill="none" stroke="#b8e6a0" stroke-width="1"/></svg>
<div class="t" style="left:331.44px;top:322px;font-size:10.8px;line-height:10.8px;color:#2b2d36;letter-spacing:0.420px;-webkit-text-stroke:0.2px #2b2d36;">EBS Volume</div>
<div class="t" style="left:613.43px;top:323px;font-size:10.2px;line-height:10.2px;color:#50525a;">905</div>
<div class="a" style="left:640px;top:318.4px;width:84.88px;height:16.80px;border:1px solid #e8eaee;border-radius:8px"></div>
<svg class="a" style="left:646.7px;top:323px;" width="9" height="9" viewBox="0 0 9 9"><g fill="none" stroke="#3a3c44" stroke-width="0.9"><circle cx="4.5" cy="4.5" r="4"/><ellipse cx="4.5" cy="4.5" rx="1.8" ry="4"/><path d="M0.5 4.5 L8.5 4.5"/></g></svg>
<div class="t" style="left:660.34px;top:323px;font-size:9.0px;line-height:9.0px;color:#50525a;">ap-northeast-1</div>
<div class="a" style="left:728.68px;top:320px;width:23.16px;height:14.50px;border:1px solid #e8eaee;border-radius:3px"></div>
<div class="t" style="left:733.27px;top:324px;font-size:8.2px;line-height:8.2px;color:#50525a;">+18</div>
<div class="a" style="left:775.3px;top:318.4px;width:52.99px;height:16.80px;border:1px solid #e8eaee;border-radius:8px"></div>
<div class="t" style="left:780.94px;top:323px;font-size:9.0px;line-height:9.0px;color:#50525a;">gobtesting</div>
<div class="a" style="left:883.8px;top:318.4px;width:67.57px;height:16.80px;border:1px solid #e8eaee;border-radius:8px"></div>
<div class="t" style="left:889.44px;top:323px;font-size:9.0px;line-height:9.0px;color:#50525a;">cloud-security</div>
<svg class="a" style="left:969.9px;top:319.8px;" width="15" height="15" viewBox="0 0 15 15"><rect x="0" y="0" width="15" height="15" rx="1.5" fill="#2e6b45"/><g fill="#fff"><circle cx="5.5" cy="8" r="2.6"/><path d="M4.8 3.6 L6.2 3.6 L6.5 5 L7.8 4.4 L8.8 5.4 L8.2 6.7 L9.6 7 L9.6 8.9 L8.2 9.2 L8.8 10.5 L7.8 11.5 L6.5 10.9 L6.2 12.4 L4.8 12.4 L4.5 10.9 L3.2 11.5 L2.2 10.5 L2.8 9.2 L1.4 8.9 L1.4 7 L2.8 6.7 L2.2 5.4 L3.2 4.4 L4.5 5Z"/></g><circle cx="5.5" cy="8" r="1" fill="#2e6b45"/><g fill="none" stroke="#e6c8f5" stroke-width="1"><circle cx="11" cy="4" r="1.7"/><circle cx="11" cy="11.2" r="1.7"/></g></svg>
<div class="a" style="left:984px;top:319.3px;width:58.20px;height:15.70px;border:1px solid #eceef1;border-left:none;border-radius:0 2px 2px 0"></div>
<div class="t" style="left:987.59px;top:322px;font-size:10.2px;line-height:10.2px;color:#50525a;letter-spacing:-0.291px;">chaos-cloud</div>
<div class="a" style="left:279.5px;top:387px;width:855.00px;height:1.00px;background:#eceef1"></div>
<svg class="a" style="left:287px;top:362.8px;" width="5" height="7.5" viewBox="0 0 5 7.5"><path d="M0.6 0.6 L4.2 3.7 L0.6 6.8" fill="none" stroke="#55575f" stroke-width="1.1"/></svg>
<svg class="a" style="left:310.9px;top:360px;" width="15" height="15" viewBox="0 0 15 15"><rect x="0" y="0" width="15" height="15" rx="3.5" fill="#dc2a35"/><rect x="3" y="4.5" width="9" height="6.5" fill="none" stroke="#ffc8c8" stroke-width="1"/><path d="M4.5 6.5 L5.5 9 L6.5 6.5 M8 7 L10.8 7 M8 8.8 L10.8 8.8" stroke="#ffc8c8" stroke-width="0.9" fill="none"/></svg>
<div class="t" style="left:331.33px;top:362px;font-size:10.8px;line-height:10.8px;color:#2b2d36;letter-spacing:0.420px;-webkit-text-stroke:0.2px #2b2d36;">IAM Policy</div>
<div class="t" style="left:613.37px;top:363px;font-size:10.2px;line-height:10.2px;color:#50525a;">890</div>
<div class="a" style="left:640px;top:358.4px;width:63.60px;height:16.80px;border:1px solid #e8eaee;border-radius:8px"></div>
<svg class="a" style="left:646.7px;top:363px;" width="9" height="9" viewBox="0 0 9 9"><g fill="none" stroke="#3a3c44" stroke-width="0.9"><circle cx="4.5" cy="4.5" r="4"/><ellipse cx="4.5" cy="4.5" rx="1.8" ry="4"/><path d="M0.5 4.5 L8.5 4.5"/></g></svg>
<div class="t" style="left:660.12px;top:363px;font-size:9.0px;line-height:9.0px;color:#50525a;">us-east-1</div>
<div class="a" style="left:775.3px;top:358.4px;width:26.48px;height:16.80px;border:1px solid #e8eaee;border-radius:8px"></div>
<div class="t" style="left:780.94px;top:363px;font-size:9.0px;line-height:9.0px;color:#50525a;">dev</div>
<div class="a" style="left:805.18px;top:360px;width:18.57px;height:14.50px;border:1px solid #e8eaee;border-radius:3px"></div>
<div class="t" style="left:809.77px;top:364px;font-size:8.2px;line-height:8.2px;color:#50525a;">+1</div>
<div class="a" style="left:884px;top:359px;width:42.00px;height:16.50px;border:1px solid #eceef1;border-radius:2px"></div>
<div class="t" style="left:887.11px;top:362px;font-size:9.5px;line-height:9.5px;color:#50525a;">4 Teams</div>
<div class="a" style="left:279.5px;top:427px;width:855.00px;height:1.00px;background:#eceef1"></div>
<svg class="a" style="left:287px;top:402.8px;" width="5" height="7.5" viewBox="0 0 5 7.5"><path d="M0.6 0.6 L4.2 3.7 L0.6 6.8" fill="none" stroke="#55575f" stroke-width="1.1"/></svg>
<svg class="a" style="left:310.9px;top:400px;" width="15" height="15" viewBox="0 0 15 15"><text x="3.2" y="10.8" font-family="Liberation Sans" font-size="13" fill="#111">a</text><path d="M2 12.6 C5.5 14.3 9.5 14.3 13 12.2" fill="none" stroke="#f5c58a" stroke-width="1"/></svg>
<div class="t" style="left:331.44px;top:402px;font-size:10.8px;line-height:10.8px;color:#2b2d36;letter-spacing:0.420px;-webkit-text-stroke:0.2px #2b2d36;">Elastic Network Interfaces</div>
<div class="t" style="left:613.32px;top:403px;font-size:10.2px;line-height:10.2px;color:#50525a;">824</div>
<div class="a" style="left:640px;top:398.4px;width:84.88px;height:16.80px;border:1px solid #e8eaee;border-radius:8px"></div>
<svg class="a" style="left:646.7px;top:403px;" width="9" height="9" viewBox="0 0 9 9"><g fill="none" stroke="#3a3c44" stroke-width="0.9"><circle cx="4.5" cy="4.5" r="4"/><ellipse cx="4.5" cy="4.5" rx="1.8" ry="4"/><path d="M0.5 4.5 L8.5 4.5"/></g></svg>
<div class="t" style="left:660.34px;top:403px;font-size:9.0px;line-height:9.0px;color:#50525a;">ap-northeast-1</div>
<div class="a" style="left:728.68px;top:400px;width:23.16px;height:14.50px;border:1px solid #e8eaee;border-radius:3px"></div>
<div class="t" style="left:733.27px;top:404px;font-size:8.2px;line-height:8.2px;color:#50525a;">+13</div>
<div class="a" style="left:279.5px;top:467px;width:855.00px;height:1.00px;background:#eceef1"></div>
<svg class="a" style="left:287px;top:442.8px;" width="5" height="7.5" viewBox="0 0 5 7.5"><path d="M0.6 0.6 L4.2 3.7 L0.6 6.8" fill="none" stroke="#55575f" stroke-width="1.1"/></svg>
<svg class="a" style="left:310.9px;top:440px;" width="15" height="15" viewBox="0 0 15 15"><rect x="0" y="0" width="15" height="15" rx="3.5" fill="#dc2a35"/><rect x="3" y="4.5" width="9" height="6.5" fill="none" stroke="#ffc8c8" stroke-width="1"/><path d="M4.5 6.5 L5.5 9 L6.5 6.5 M8 7 L10.8 7 M8 8.8 L10.8 8.8" stroke="#ffc8c8" stroke-width="0.9" fill="none"/></svg>
<div class="t" style="left:331.33px;top:442px;font-size:10.8px;line-height:10.8px;color:#2b2d36;letter-spacing:0.420px;-webkit-text-stroke:0.2px #2b2d36;">IAM Role</div>
<div class="t" style="left:613.53px;top:443px;font-size:10.2px;line-height:10.2px;color:#50525a;">527</div>
<div class="a" style="left:775.3px;top:438.4px;width:26.48px;height:16.80px;border:1px solid #e8eaee;border-radius:8px"></div>
<div class="t" style="left:780.94px;top:443px;font-size:9.0px;line-height:9.0px;color:#50525a;">dev</div>
<div class="a" style="left:805.18px;top:440px;width:18.53px;height:14.50px;border:1px solid #e8eaee;border-radius:3px"></div>
<div class="t" style="left:809.77px;top:444px;font-size:8.2px;line-height:8.2px;color:#50525a;">+2</div>
<div class="a" style="left:884px;top:439px;width:46.79px;height:16.50px;border:1px solid #eceef1;border-radius:2px"></div>
<div class="t" style="left:886.59px;top:442px;font-size:9.5px;line-height:9.5px;color:#50525a;">10 Teams</div>
<svg class="a" style="left:969.9px;top:439.8px;" width="15" height="15" viewBox="0 0 15 15"><rect x="0" y="0" width="15" height="15" rx="1.5" fill="#7d2ab1"/><g fill="#fff"><circle cx="5.5" cy="8" r="2.6"/><path d="M4.8 3.6 L6.2 3.6 L6.5 5 L7.8 4.4 L8.8 5.4 L8.2 6.7 L9.6 7 L9.6 8.9 L8.2 9.2 L8.8 10.5 L7.8 11.5 L6.5 10.9 L6.2 12.4 L4.8 12.4 L4.5 10.9 L3.2 11.5 L2.2 10.5 L2.8 9.2 L1.4 8.9 L1.4 7 L2.8 6.7 L2.2 5.4 L3.2 4.4 L4.5 5Z"/></g><circle cx="5.5" cy="8" r="1" fill="#7d2ab1"/><g fill="none" stroke="#e6c8f5" stroke-width="1"><circle cx="11" cy="4" r="1.7"/><circle cx="11" cy="11.2" r="1.7"/></g></svg>
<div class="a" style="left:984px;top:439.3px;width:43.00px;height:15.70px;border:1px solid #eceef1;border-left:none;border-radius:0 2px 2px 0"></div>
<div class="t" style="left:987.59px;top:442px;font-size:10.2px;line-height:10.2px;color:#50525a;letter-spacing:-0.034px;">appgate</div>
<div class="a" style="left:1036.0px;top:440px;width:18.53px;height:14.50px;border:1px solid #e8eaee;border-radius:3px"></div>
<div class="t" style="left:1040.59px;top:444px;font-size:8.2px;line-height:8.2px;color:#50525a;">+7</div>
<div class="a" style="left:279.5px;top:507px;width:855.00px;height:1.00px;background:#eceef1"></div>
<svg class="a" style="left:287px;top:482.8px;" width="5" height="7.5" viewBox="0 0 5 7.5"><path d="M0.6 0.6 L4.2 3.7 L0.6 6.8" fill="none" stroke="#55575f" stroke-width="1.1"/></svg>
<svg class="a" style="left:310.9px;top:480px;" width="15" height="15" viewBox="0 0 15 15"><rect x="0" y="0" width="15" height="15" rx="3.5" fill="#52a235"/><path d="M4 4 L11 4 L10 11 C9 12 6 12 5 11 Z" fill="none" stroke="#c2eaa8" stroke-width="1.1"/><path d="M4.3 5.8 L10.7 5.8" stroke="#c2eaa8" stroke-width="0.9"/><circle cx="9.5" cy="8" r="1.2" fill="none" stroke="#c2eaa8" stroke-width="0.8"/></svg>
<div class="t" style="left:331.81px;top:482px;font-size:10.8px;line-height:10.8px;color:#2b2d36;letter-spacing:0.420px;-webkit-text-stroke:0.2px #2b2d36;">S3 Bucket</div>
<div class="t" style="left:613.42px;top:483px;font-size:10.2px;line-height:10.2px;color:#50525a;">515</div>
<div class="a" style="left:640px;top:478.4px;width:84.88px;height:16.80px;border:1px solid #e8eaee;border-radius:8px"></div>
<svg class="a" style="left:646.7px;top:483px;" width="9" height="9" viewBox="0 0 9 9"><g fill="none" stroke="#3a3c44" stroke-width="0.9"><circle cx="4.5" cy="4.5" r="4"/><ellipse cx="4.5" cy="4.5" rx="1.8" ry="4"/><path d="M0.5 4.5 L8.5 4.5"/></g></svg>
<div class="t" style="left:660.34px;top:483px;font-size:9.0px;line-height:9.0px;color:#50525a;">ap-northeast-1</div>
<div class="a" style="left:728.68px;top:480px;width:23.12px;height:14.50px;border:1px solid #e8eaee;border-radius:3px"></div>
<div class="t" style="left:733.27px;top:484px;font-size:8.2px;line-height:8.2px;color:#50525a;">+19</div>
<div class="a" style="left:775.3px;top:478.4px;width:35.98px;height:16.80px;border:1px solid #e8eaee;border-radius:8px"></div>
<div class="t" style="left:780.94px;top:483px;font-size:9.0px;line-height:9.0px;color:#50525a;">admin</div>
<div class="a" style="left:814.68px;top:480px;width:18.61px;height:14.50px;border:1px solid #e8eaee;border-radius:3px"></div>
<div class="t" style="left:819.27px;top:484px;font-size:8.2px;line-height:8.2px;color:#50525a;">+3</div>
<div class="a" style="left:884px;top:479px;width:46.79px;height:16.50px;border:1px solid #eceef1;border-radius:2px"></div>
<div class="t" style="left:886.59px;top:482px;font-size:9.5px;line-height:9.5px;color:#50525a;">10 Teams</div>
<svg class="a" style="left:969.9px;top:479.8px;" width="15" height="15" viewBox="0 0 15 15"><rect x="0" y="0" width="15" height="15" rx="1.5" fill="#2e6b45"/><g fill="#fff"><circle cx="5.5" cy="8" r="2.6"/><path d="M4.8 3.6 L6.2 3.6 L6.5 5 L7.8 4.4 L8.8 5.4 L8.2 6.7 L9.6 7 L9.6 8.9 L8.2 9.2 L8.8 10.5 L7.8 11.5 L6.5 10.9 L6.2 12.4 L4.8 12.4 L4.5 10.9 L3.2 11.5 L2.2 10.5 L2.8 9.2 L1.4 8.9 L1.4 7 L2.8 6.7 L2.2 5.4 L3.2 4.4 L4.5 5Z"/></g><circle cx="5.5" cy="8" r="1" fill="#2e6b45"/><g fill="none" stroke="#e6c8f5" stroke-width="1"><circle cx="11" cy="4" r="1.7"/><circle cx="11" cy="11.2" r="1.7"/></g></svg>
<div class="a" style="left:984px;top:479.3px;width:58.20px;height:15.70px;border:1px solid #eceef1;border-left:none;border-radius:0 2px 2px 0"></div>
<div class="t" style="left:987.59px;top:482px;font-size:10.2px;line-height:10.2px;color:#50525a;letter-spacing:-0.291px;">chaos-cloud</div>
<div class="a" style="left:1051.2px;top:480px;width:18.57px;height:14.50px;border:1px solid #e8eaee;border-radius:3px"></div>
<div class="t" style="left:1055.79px;top:484px;font-size:8.2px;line-height:8.2px;color:#50525a;">+1</div>
<div class="a" style="left:279.5px;top:547px;width:855.00px;height:1.00px;background:#eceef1"></div>
<svg class="a" style="left:287px;top:522.8px;" width="5" height="7.5" viewBox="0 0 5 7.5"><path d="M0.6 0.6 L4.2 3.7 L0.6 6.8" fill="none" stroke="#55575f" stroke-width="1.1"/></svg>
<svg class="a" style="left:310.9px;top:520px;" width="15" height="15" viewBox="0 0 15 15"><rect x="0" y="0" width="15" height="15" rx="3.5" fill="#52a235"/><g fill="#b8e6a0"><circle cx="4" cy="4" r="1.1"/><circle cx="11" cy="4" r="1.1"/><circle cx="4" cy="11" r="1.1"/><circle cx="11" cy="11" r="1.1"/></g><rect x="5.5" y="5" width="4" height="5" rx="1" fill="none" stroke="#b8e6a0" stroke-width="1"/></svg>
<div class="t" style="left:331.44px;top:522px;font-size:10.8px;line-height:10.8px;color:#2b2d36;letter-spacing:0.420px;-webkit-text-stroke:0.2px #2b2d36;">EBS Snapshot</div>
<div class="t" style="left:613.42px;top:523px;font-size:10.2px;line-height:10.2px;color:#50525a;">336</div>
<div class="a" style="left:640px;top:518.4px;width:84.88px;height:16.80px;border:1px solid #e8eaee;border-radius:8px"></div>
<svg class="a" style="left:646.7px;top:523px;" width="9" height="9" viewBox="0 0 9 9"><g fill="none" stroke="#3a3c44" stroke-width="0.9"><circle cx="4.5" cy="4.5" r="4"/><ellipse cx="4.5" cy="4.5" rx="1.8" ry="4"/><path d="M0.5 4.5 L8.5 4.5"/></g></svg>
<div class="t" style="left:660.34px;top:523px;font-size:9.0px;line-height:9.0px;color:#50525a;">ap-northeast-1</div>
<div class="a" style="left:728.68px;top:520px;width:23.16px;height:14.50px;border:1px solid #e8eaee;border-radius:3px"></div>
<div class="t" style="left:733.27px;top:524px;font-size:8.2px;line-height:8.2px;color:#50525a;">+18</div>
<div class="a" style="left:775.3px;top:518.4px;width:34.18px;height:16.80px;border:1px solid #e8eaee;border-radius:8px"></div>
<div class="t" style="left:780.94px;top:523px;font-size:9.0px;line-height:9.0px;color:#50525a;">demo</div>
<div class="a" style="left:884px;top:519px;width:41.71px;height:16.50px;border:1px solid #eceef1;border-radius:2px"></div>
<div class="t" style="left:886.82px;top:522px;font-size:9.5px;line-height:9.5px;color:#50525a;">2 Teams</div>
<svg class="a" style="left:969.9px;top:519.8px;" width="15" height="15" viewBox="0 0 15 15"><rect x="0" y="0" width="15" height="15" rx="1.5" fill="#2e6b45"/><g fill="#fff"><circle cx="5.5" cy="8" r="2.6"/><path d="M4.8 3.6 L6.2 3.6 L6.5 5 L7.8 4.4 L8.8 5.4 L8.2 6.7 L9.6 7 L9.6 8.9 L8.2 9.2 L8.8 10.5 L7.8 11.5 L6.5 10.9 L6.2 12.4 L4.8 12.4 L4.5 10.9 L3.2 11.5 L2.2 10.5 L2.8 9.2 L1.4 8.9 L1.4 7 L2.8 6.7 L2.2 5.4 L3.2 4.4 L4.5 5Z"/></g><circle cx="5.5" cy="8" r="1" fill="#2e6b45"/><g fill="none" stroke="#e6c8f5" stroke-width="1"><circle cx="11" cy="4" r="1.7"/><circle cx="11" cy="11.2" r="1.7"/></g></svg>
<div class="a" style="left:984px;top:519.3px;width:58.20px;height:15.70px;border:1px solid #eceef1;border-left:none;border-radius:0 2px 2px 0"></div>
<div class="t" style="left:987.59px;top:522px;font-size:10.2px;line-height:10.2px;color:#50525a;letter-spacing:-0.291px;">chaos-cloud</div>
<div class="a" style="left:279.5px;top:587px;width:855.00px;height:1.00px;background:#eceef1"></div>
<svg class="a" style="left:287px;top:562.8px;" width="5" height="7.5" viewBox="0 0 5 7.5"><path d="M0.6 0.6 L4.2 3.7 L0.6 6.8" fill="none" stroke="#55575f" stroke-width="1.1"/></svg>
<svg class="a" style="left:310.9px;top:560px;" width="15" height="15" viewBox="0 0 15 15"><rect x="0" y="0" width="15" height="15" rx="3.5" fill="#ef8a1c"/><rect x="3.5" y="3.5" width="8" height="8" fill="none" stroke="#ffd9a8" stroke-width="1"/><circle cx="7.5" cy="7.5" r="2.3" fill="none" stroke="#ffd9a8" stroke-width="1.1"/></svg>
<div class="t" style="left:331.44px;top:562px;font-size:10.8px;line-height:10.8px;color:#2b2d36;letter-spacing:0.420px;-webkit-text-stroke:0.2px #2b2d36;">EC2 Instance</div>
<div class="t" style="left:613.53px;top:563px;font-size:10.2px;line-height:10.2px;color:#50525a;">322</div>
<div class="a" style="left:640px;top:558.4px;width:84.88px;height:16.80px;border:1px solid #e8eaee;border-radius:8px"></div>
<svg class="a" style="left:646.7px;top:563px;" width="9" height="9" viewBox="0 0 9 9"><g fill="none" stroke="#3a3c44" stroke-width="0.9"><circle cx="4.5" cy="4.5" r="4"/><ellipse cx="4.5" cy="4.5" rx="1.8" ry="4"/><path d="M0.5 4.5 L8.5 4.5"/></g></svg>
<div class="t" style="left:660.34px;top:563px;font-size:9.0px;line-height:9.0px;color:#50525a;">ap-northeast-1</div>
<div class="a" style="left:728.68px;top:560px;width:18.57px;height:14.50px;border:1px solid #e8eaee;border-radius:3px"></div>
<div class="t" style="left:733.27px;top:564px;font-size:8.2px;line-height:8.2px;color:#50525a;">+9</div>
<div class="a" style="left:775.3px;top:558.4px;width:63.52px;height:16.80px;border:1px solid #e8eaee;border-radius:8px"></div>
<div class="t" style="left:780.94px;top:563px;font-size:9.0px;line-height:9.0px;color:#50525a;">datad0g.com</div>
<div class="a" style="left:842.22px;top:560px;width:18.57px;height:14.50px;border:1px solid #e8eaee;border-radius:3px"></div>
<div class="t" style="left:846.81px;top:564px;font-size:8.2px;line-height:8.2px;color:#50525a;">+1</div>
<div class="a" style="left:884px;top:559px;width:46.79px;height:16.50px;border:1px solid #eceef1;border-radius:2px"></div>
<div class="t" style="left:886.59px;top:562px;font-size:9.5px;line-height:9.5px;color:#50525a;">10 Teams</div>
<svg class="a" style="left:969.9px;top:559.8px;" width="15" height="15" viewBox="0 0 15 15"><rect x="0" y="0" width="15" height="15" rx="1.5" fill="#7d2ab1"/><g fill="#fff"><circle cx="5.5" cy="8" r="2.6"/><path d="M4.8 3.6 L6.2 3.6 L6.5 5 L7.8 4.4 L8.8 5.4 L8.2 6.7 L9.6 7 L9.6 8.9 L8.2 9.2 L8.8 10.5 L7.8 11.5 L6.5 10.9 L6.2 12.4 L4.8 12.4 L4.5 10.9 L3.2 11.5 L2.2 10.5 L2.8 9.2 L1.4 8.9 L1.4 7 L2.8 6.7 L2.2 5.4 L3.2 4.4 L4.5 5Z"/></g><circle cx="5.5" cy="8" r="1" fill="#7d2ab1"/><g fill="none" stroke="#e6c8f5" stroke-width="1"><circle cx="11" cy="4" r="1.7"/><circle cx="11" cy="11.2" r="1.7"/></g></svg>
<div class="a" style="left:984px;top:559.3px;width:43.00px;height:15.70px;border:1px solid #eceef1;border-left:none;border-radius:0 2px 2px 0"></div>
<div class="t" style="left:987.59px;top:562px;font-size:10.2px;line-height:10.2px;color:#50525a;letter-spacing:-0.034px;">appgate</div>
<div class="a" style="left:1036.0px;top:560px;width:18.61px;height:14.50px;border:1px solid #e8eaee;border-radius:3px"></div>
<div class="t" style="left:1040.59px;top:564px;font-size:8.2px;line-height:8.2px;color:#50525a;">+5</div>
<svg class="a" style="left:287px;top:602.8px;" width="5" height="7.5" viewBox="0 0 5 7.5"><path d="M0.6 0.6 L4.2 3.7 L0.6 6.8" fill="none" stroke="#55575f" stroke-width="1.1"/></svg>
<svg class="a" style="left:310.9px;top:600px;" width="15" height="15" viewBox="0 0 15 15"><rect x="0" y="0" width="15" height="15" rx="3.5" fill="#dc2a35"/><circle cx="5.5" cy="5.5" r="2.5" fill="none" stroke="#ffc8c8" stroke-width="1.1"/><path d="M7 7 L11.5 11.5 M9.5 9.5 L11 8" stroke="#ffc8c8" stroke-width="1.1"/></svg>
<div class="t" style="left:331.44px;top:602px;font-size:10.8px;line-height:10.8px;color:#2b2d36;letter-spacing:0.420px;-webkit-text-stroke:0.2px #2b2d36;">Key Management Service</div>
<div class="t" style="left:613.43px;top:603px;font-size:10.2px;line-height:10.2px;color:#50525a;">198</div>
<div class="a" style="left:640px;top:598.4px;width:84.88px;height:16.80px;border:1px solid #e8eaee;border-radius:8px"></div>
<svg class="a" style="left:646.7px;top:603px;" width="9" height="9" viewBox="0 0 9 9"><g fill="none" stroke="#3a3c44" stroke-width="0.9"><circle cx="4.5" cy="4.5" r="4"/><ellipse cx="4.5" cy="4.5" rx="1.8" ry="4"/><path d="M0.5 4.5 L8.5 4.5"/></g></svg>
<div class="t" style="left:660.34px;top:603px;font-size:9.0px;line-height:9.0px;color:#50525a;">ap-northeast-1</div>
<div class="a" style="left:728.68px;top:600px;width:23.16px;height:14.50px;border:1px solid #e8eaee;border-radius:3px"></div>
<div class="t" style="left:733.27px;top:604px;font-size:8.2px;line-height:8.2px;color:#50525a;">+18</div>
<div class="a" style="left:775.3px;top:598.4px;width:34.18px;height:16.80px;border:1px solid #e8eaee;border-radius:8px"></div>
<div class="t" style="left:780.94px;top:603px;font-size:9.0px;line-height:9.0px;color:#50525a;">demo</div>
<div class="a" style="left:812.88px;top:600px;width:18.53px;height:14.50px;border:1px solid #e8eaee;border-radius:3px"></div>
<div class="t" style="left:817.47px;top:604px;font-size:8.2px;line-height:8.2px;color:#50525a;">+2</div>
<div class="a" style="left:884px;top:599px;width:41.71px;height:16.50px;border:1px solid #eceef1;border-radius:2px"></div>
<div class="t" style="left:886.82px;top:602px;font-size:9.5px;line-height:9.5px;color:#50525a;">6 Teams</div>
</body></html>
